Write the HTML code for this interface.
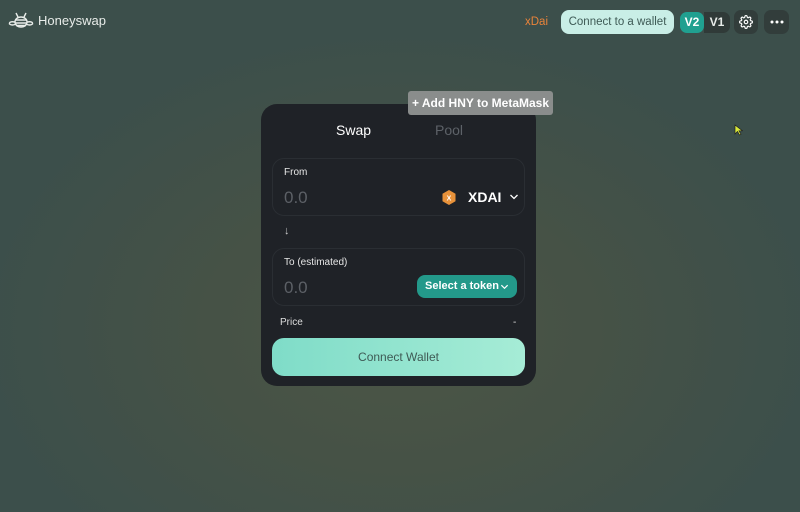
<!DOCTYPE html>
<html><head><meta charset="utf-8"><style>
*{margin:0;padding:0;box-sizing:border-box}
body{width:800px;height:512px;overflow:hidden;font-family:"Liberation Sans",sans-serif;
background:radial-gradient(ellipse 420px 300px at 400px 330px,#4c5646 0%,#465246 45%,rgba(60,79,75,0) 100%),#3c4f4b;position:relative}
.abs{position:absolute}
.logo{left:8px;top:10px;color:#e8ece9;font-size:13px;display:flex;align-items:center;gap:4px}
.xdai{left:525px;top:16px;color:#e8833a;font-size:11.5px}
.conn{left:561px;top:10px;width:113px;height:24px;border-radius:8px;background:#c9eee6;color:#3e5a55;font-size:11.5px;text-align:center;line-height:24px}
.v2{left:680px;top:12px;width:24px;height:21px;border-radius:7px;background:#20a090;color:#fff;font-size:12px;font-weight:bold;text-align:center;line-height:21px}
.v1{left:704px;top:12px;width:26px;height:21px;border-radius:0 7px 7px 0;background:#303a38;color:#e8ece9;font-size:12px;font-weight:bold;text-align:center;line-height:21px}
.ib{top:10px;width:24px;height:24px;border-radius:7px;background:#323d3b;display:flex;align-items:center;justify-content:center}
.tip{left:408px;top:91px;width:145px;height:24px;border-radius:3px;background:#8a8d8c;color:#fff;font-size:12px;font-weight:bold;text-align:center;line-height:24px;white-space:nowrap}
.card{left:261px;top:104px;width:275px;height:282px;border-radius:16px;background:#1f2227}
.tab{top:122px;font-size:14px}
.box{left:272px;width:253px;height:58px;border-radius:12px;border:1px solid #2a2e33}
.lbl{font-size:10px;color:#e6e6e6;position:absolute;left:11px;top:8px}
.zero{position:absolute;left:11px;top:29px;font-size:17px;color:#5c6066}
.btn{left:272px;top:338px;width:253px;height:38px;border-radius:12px;background:linear-gradient(90deg,#7fdcc8,#a6ecd6);color:#3f5a55;font-size:12px;text-align:center;line-height:38px}
</style></head><body>
<div class="abs logo"><svg width="26" height="20" viewBox="0 0 26 20" fill="none" stroke="#e8ece9" stroke-width="1.4"><ellipse cx="13" cy="12" rx="6" ry="5"/><path d="M7 10h12M7 13h12M8 15.5h10"/><path d="M7 12 Q1 11 1.5 14 Q4 16 8 14M19 12 Q25 11 24.5 14 Q22 16 18 14"/><path d="M10 7 L8 3M16 7 L18 3"/></svg>Honeyswap</div>
<div class="abs xdai">xDai</div>
<div class="abs conn">Connect to a wallet</div>
<div class="abs v2">V2</div><div class="abs v1">V1</div>
<div class="abs ib" style="left:734px"><svg width="14" height="14" viewBox="0 0 24 24" fill="none" stroke="#fff" stroke-width="2"><circle cx="12" cy="12" r="3"/><path d="M19.4 15a1.65 1.65 0 0 0 .33 1.820l.06.06a2 2 0 1 1-2.830 2.830l-.06-.06a1.65 1.65 0 0 0-1.820-.33 1.65 1.65 0 0 0-1 1.510V21a2 2 0 0 1-4 0v-.09A1.65 1.65 0 0 0 9 19.4a1.65 1.65 0 0 0-1.820.33l-.06.06a2 2 0 1 1-2.830-2.830l.06-.06A1.65 1.65 0 0 0 4.68 15a1.65 1.65 0 0 0-1.510-1H3a2 2 0 0 1 0-4h.09A1.65 1.65 0 0 0 4.6 9a1.65 1.65 0 0 0-.33-1.820l-.06-.06a2 2 0 1 1 2.830-2.830l.06.06A1.65 1.65 0 0 0 9 4.68a1.65 1.65 0 0 0 1-1.510V3a2 2 0 0 1 4 0v.09a1.65 1.65 0 0 0 1 1.510 1.65 1.65 0 0 0 1.820-.33l.06-.06a2 2 0 1 1 2.830 2.830l-.06.06A1.65 1.65 0 0 0 19.4 9a1.65 1.65 0 0 0 1.510 1H21a2 2 0 0 1 0 4h-.09a1.65 1.65 0 0 0-1.510 1z"/></svg></div>
<div class="abs ib" style="left:764px;width:25px"><svg width="14" height="4" viewBox="0 0 14 4" fill="#fff"><circle cx="2" cy="2" r="1.5"/><circle cx="7" cy="2" r="1.5"/><circle cx="12" cy="2" r="1.5"/></svg></div>
<div class="abs card"></div>
<div class="abs tip">+ Add HNY to MetaMask</div>
<div class="abs tab" style="left:336px;color:#fff">Swap</div>
<div class="abs tab" style="left:435px;color:#5d6268">Pool</div>
<div class="abs box" style="top:158px"><div class="lbl">From</div><div class="zero">0.0</div>
<div style="position:absolute;left:169px;top:30px;display:flex;align-items:center;gap:8px;color:#fff;font-size:14px;font-weight:bold"><svg width="14" height="15" viewBox="0 0 14 15"><polygon points="7,0 13.5,3.75 13.5,11.25 7,15 0.5,11.25 0.5,3.75" fill="#e8923a"/><text x="7" y="10.5" font-size="7" text-anchor="middle" fill="#fff" font-family="Liberation Sans">X</text></svg><span style="margin-left:4px">XDAI</span><svg width="10" height="6" viewBox="0 0 10 6" fill="none" stroke="#fff" stroke-width="1.3"><path d="M1.5 1l3.5 3.5 3.5-3.5"/></svg></div></div>
<div class="abs" style="left:284px;top:225px;color:#ccc;font-size:11px">↓</div>
<div class="abs box" style="top:248px"><div class="lbl">To (estimated)</div><div class="zero">0.0</div>
<div style="position:absolute;left:144px;top:26px;width:100px;height:23px;border-radius:8px;background:#23998a;color:#fff;font-size:11px;font-weight:bold;line-height:23px;padding-left:8px;white-space:nowrap">Select a token<svg style="position:absolute;right:8px;top:9px" width="9" height="6" viewBox="0 0 10 6" fill="none" stroke="#fff" stroke-width="1.3"><path d="M1.5 1l3.5 3.5 3.5-3.5"/></svg></div></div>
<div class="abs" style="left:280px;top:317px;color:#ddd;font-size:10px">Price</div>
<div class="abs" style="left:513px;top:317px;color:#ddd;font-size:10px">-</div>
<div class="abs btn">Connect Wallet</div>
<svg class="abs" style="left:734px;top:124px" width="9" height="12" viewBox="0 0 9 12"><path d="M1 1v9l2.5-2.5 2 3.5 1.5-.8-2-3.4h3.5z" fill="#d8e83a" stroke="#222" stroke-width=".7"/></svg>
</body></html>
